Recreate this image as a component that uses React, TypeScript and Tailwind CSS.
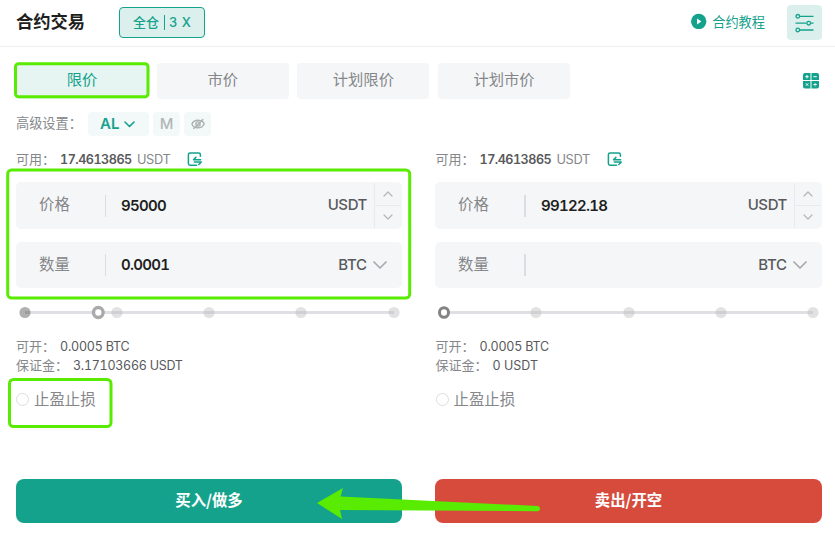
import React from "react";

const cjk = "font-['Noto_Sans_CJK_SC',sans-serif]";
const latin = "font-['Inter','Noto_Sans_CJK_SC',sans-serif] tabular-nums";

function Chevron({ className, up = false, w = 8, h = 4, stroke = 1.2 }: { className?: string; up?: boolean; w?: number; h?: number; stroke?: number }) {
  return (
    <svg width={w + 2} height={h + 2} viewBox={`0 0 ${w + 2} ${h + 2}`} fill="none" stroke="currentColor" strokeWidth={stroke} strokeLinecap="round" strokeLinejoin="round" className={className}>
      <path d={up ? `M1 ${h + 1}L${w / 2 + 1} 1L${w + 1} ${h + 1}` : `M1 1L${w / 2 + 1} ${h + 1}L${w + 1} 1`} />
    </svg>
  );
}

function TransferIcon() {
  return (
    <svg width="16" height="16" viewBox="0 0 16 16" fill="none" stroke="#15a28c" strokeWidth="1.5" strokeLinecap="round" strokeLinejoin="round">
      <path d="M13.4 5.2V3.6Q13.4 1.9 11.7 1.9H3.1Q1.4 1.9 1.4 3.6V12.5Q1.4 14.2 3.1 14.2H9.6" />
      <path d="M13.6 8.8H6.5L8.9 6.4M7.3 11.1H14.2L11.8 13.5" />
    </svg>
  );
}

function Header() {
  return (
    <header className="flex h-[47px] items-start border-b border-[#eeeff1] pl-4 pr-[13px]">
      <h1 className="mt-[8px] w-[103px] text-[17.3px] font-bold leading-[25px] text-[#1e1f20]">合约交易</h1>
      <div className="mt-[7px] flex h-[31px] w-[86px] items-center rounded-[4px] border border-[#15a28c] bg-[#dbf0ed] pl-[13px] text-[13px] font-medium text-[#15a28c]">
        <span className="pb-[2px]">全仓</span>
        <span className="ml-[5px] h-[15px] w-px bg-[#15a28c]" />
        <span className={`${latin} ml-[4px] text-[13px] tracking-[0.4px]`}>3 X</span>
      </div>
      <div className="ml-auto mt-[13px] flex h-4 items-center text-[13.2px] text-[#15a28c]">
        <svg width="16" height="16" viewBox="0 0 16 16"><circle cx="7.7" cy="8.5" r="7.7" fill="#15a28c" /><path d="M6 5.5L10.4 8.5L6 11.5Z" fill="white" /></svg>
        <span className="ml-[5px] pt-px">合约教程</span>
      </div>
      <div className="ml-[22px] mt-[5px] flex h-[35px] w-[35px] items-center justify-center rounded-[4px] bg-[#dbf0ed]">
        <svg width="20" height="20" viewBox="0 0 20 20" fill="none" stroke="#15a28c" strokeWidth="1.3">
          <path d="M4.5 3.3H18.5M.5 10.2H11.5M15.6 10.2H18.5M4.5 17H18.5" />
          <circle cx="2.8" cy="3.3" r="1.8" /><circle cx="13.7" cy="10.2" r="1.8" /><circle cx="2.8" cy="17" r="1.8" />
        </svg>
      </div>
    </header>
  );
}

function Tabs() {
  const tabs = ["限价", "市价", "计划限价", "计划市价"];
  return (
    <div className="mt-4 flex h-9 items-center justify-between pl-4 pr-4">
      <div className="flex gap-[8.7px]">
        {tabs.map((t, i) => (
          <div key={t} className={`flex h-9 w-[132px] items-center justify-center rounded-[4px] pb-[5px] text-[15.3px] ${i === 0 ? "bg-[#e7f5f2] text-[#15a28c]" : "bg-[#f5f6f8] text-[#85878a]"}`}>{t}</div>
        ))}
      </div>
      <svg width="16" height="16" viewBox="0 0 16 16">
        <path fill="#15a28c" d="M2 0H7.5V7.1H0V2Q0 0 2 0ZM8.5 0H14Q16 0 16 2V7.1H8.5ZM0 8.1H7.5V15.4H2Q0 15.4 0 13.4ZM8.5 8.1H16V13.4Q16 15.4 14 15.4H8.5Z" />
        <path stroke="white" strokeWidth="1" d="M4 2V5.4M2.3 3.7H5.7M10.4 3.7H13.8M2.9 10.4L5.2 12.7M5.2 10.4L2.9 12.7M10.4 11.6H13.8M12.1 9.9V10.7M12.1 12.5V13.3" />
      </svg>
    </div>
  );
}

function Settings() {
  return (
    <div className="mt-[13px] flex h-6 items-center pl-4">
      <span className="w-[72px] whitespace-nowrap pb-[2px] text-[13.2px] text-[#85878a]">高级设置：</span>
      <div className={`${latin} flex h-6 w-[61px] items-center rounded-[4px] bg-[#f3f9f9] pl-3 text-[15px] font-semibold text-[#15a28c]`}>
        AL<Chevron className="ml-[5px] mt-px" w={9} h={4.5} stroke={1.6} />
      </div>
      <div className={`${latin} ml-1 flex h-6 w-[27px] items-center justify-center rounded-[4px] bg-[#f3f9f9] text-[15px] font-medium text-[#b2b6b8]`}>M</div>
      <div className="ml-1 flex h-6 w-[27px] items-center justify-center rounded-[4px] bg-[#f3f9f9]">
        <svg width="14" height="12" viewBox="0 0 14 12" fill="none" stroke="#acb1b2" strokeWidth="1.4" strokeLinecap="round">
          <path d="M3 9Q1.5 7.8 .9 6Q2.6 2.2 7 2.2Q8.5 2.2 9.6 2.6M11.4 3.4Q12.8 4.6 13.2 6Q11.3 9.8 7 9.8Q5.8 9.8 4.9 9.5M11.8 1.6L2.8 10.4" />
          <circle cx="7" cy="6" r="2.1" />
        </svg>
      </div>
    </div>
  );
}

function Box({ label, value, unit, price, wide }: { label: string; value: string; unit: string; price?: boolean; wide?: boolean }) {
  return (
    <div className={`flex w-full items-center rounded-[5px] bg-[#f5f6f8] ${price ? "h-[47px]" : "h-[46px]"}`}>
      <span className={`w-[89px] pl-[23px] text-[15.4px] text-[#85878a] ${price ? "pb-[3px]" : "pb-[2px]"}`}>{label}</span>
      <span className={`h-[22px] bg-[#dcdde0] ${wide ? "w-[2px]" : "w-px"}`} />
      <span className={`${latin} ml-[15px] text-[15px] font-semibold tracking-[-0.7px] text-[#1e1f20] ${price ? "pt-px" : ""}`}>{value}</span>
      <span className={`${latin} ml-auto text-[15px] font-medium tracking-[-0.4px] text-[#58595b]`}>{unit}</span>
      {price ? (
        <div className="ml-[7px] mr-px flex h-[45px] w-[27px] flex-col border-l border-[#e9eaec] text-[#b5b6b9]">
          <div className="flex h-[23px] items-center justify-center border-b border-[#e9eaec]"><Chevron up /></div>
          <div className="flex h-[22px] items-center justify-center pb-px"><Chevron /></div>
        </div>
      ) : (
        <Chevron className="ml-[6px] mr-[15.5px]" w={12} h={6} stroke={1.7} />
      )}
    </div>
  );
}

function Track({ active }: { active: boolean }) {
  return (
    <svg className="mt-[17px] block h-[15px] w-full" viewBox={active ? "16 305 386 15" : "435 305 387 15"} fill="none">
      {active ? (
        <g>
          <path d="M25 312.5H394" stroke="#dfe0e6" strokeWidth="3" />
          <circle cx="25" cy="312.5" r="5.6" fill="#b0b0b1" />
          <path d="M25 312.5H30" stroke="#9c9da0" strokeWidth="3" />
          <g fill="#bbb" opacity=".42"><circle cx="117" cy="312.5" r="5.6" /><circle cx="209" cy="312.5" r="5.6" /><circle cx="301" cy="312.5" r="5.6" /><circle cx="394" cy="312.5" r="5.6" /></g>
          <ellipse cx="98.3" cy="312.5" rx="4.8" ry="5" fill="white" stroke="#aaa" strokeWidth="3.4" />
        </g>
      ) : (
        <g>
          <path d="M444 312.5H813" stroke="#dfe0e4" strokeWidth="3" />
          <g fill="#bbb" opacity=".42"><circle cx="536" cy="312.5" r="5.6" /><circle cx="629" cy="312.5" r="5.6" /><circle cx="721" cy="312.5" r="5.6" /><circle cx="813" cy="312.5" r="5.6" /></g>
          <ellipse cx="444" cy="312.5" rx="4.5" ry="4.8" fill="white" stroke="#828384" strokeWidth="3" />
        </g>
      )}
    </svg>
  );
}

function Panel({ buy }: { buy: boolean }) {
  const inset = buy ? "" : "pl-[0.5px]";
  return (
    <section className={buy ? "w-[386px]" : "w-[387px]"}>
      <div className={`${inset} flex h-4 items-center whitespace-nowrap text-[13px] text-[#85878a]`}>
        <span className="w-[44px] shrink-0 pb-px">可用：</span>
        <span className={`${latin} w-[77px] shrink-0 pt-[2px] text-[12.6px] font-semibold tracking-[-0.5px] text-[#58595b]`}>17.4613865</span>
        <span className={`${latin} w-[50px] shrink-0 pt-[2px] text-[12.8px] tracking-[-0.4px]`}>USDT</span>
        <TransferIcon />
      </div>
      <div className="mt-[15px] flex flex-col gap-[13px] text-[#a8aaad]">
        <Box label="价格" value={buy ? "95000" : "99122.18"} unit="USDT" price wide={!buy} />
        <Box label="数量" value={buy ? "0.0001" : ""} unit="BTC" wide={!buy} />
      </div>
      <Track active={buy} />
      <div className={`${inset} mt-[17px] flex h-[19px] items-center text-[13px] text-[#85878a]`}>
        <span className="w-[44px] whitespace-nowrap pb-[2px]">可开：</span>
        <span className={`${latin} pt-px text-[12.5px] tracking-[-0.2px] text-[#58595b]`}>0.0005 BTC</span>
      </div>
      <div className={`${inset} flex h-[19px] items-center text-[13px] text-[#85878a]`}>
        <span className="w-[57px] whitespace-nowrap pb-[2px]">保证金：</span>
        <span className={`${latin} pt-px text-[12.5px] text-[#58595b] ${buy ? "tracking-[-0.27px]" : ""}`}>{buy ? "3.17103666 USDT" : "0 USDT"}</span>
      </div>
      <div className={`${inset} mt-[14px] flex h-5 items-center text-[15.4px] text-[#85878a]`}>
        <span className="mr-[5px] h-[13px] w-[13px] rounded-full border border-[#dcdddf]" />
        <span className="pb-px">止盈止损</span>
      </div>
      <button className={`mt-[70px] flex h-11 w-full items-center justify-center rounded-[8px] pb-[3px] text-[15.4px] font-bold text-white ${buy ? "bg-[#15a28c]" : "bg-[#d64b3b]"}`}>
        {buy ? "买入/做多" : "卖出/开空"}
      </button>
    </section>
  );
}

export default function App() {
  return (
    <main lang="zh-CN" className={`${cjk} relative h-[535px] w-[835px] overflow-hidden bg-white`}>
      <Header />
      <Tabs />
      <Settings />
      <div className="mt-[15px] flex gap-[33px] pl-4">
        <Panel buy />
        <Panel buy={false} />
      </div>
      <svg className="pointer-events-none absolute inset-0" width="835" height="535" fill="none" stroke="#59eb02" strokeWidth="3">
        <rect x="15.5" y="63.7" width="132.5" height="33" rx="3" />
        <rect x="7.7" y="170" width="402" height="128" rx="4" />
        <rect x="9.5" y="379.5" width="101.5" height="47" rx="4" />
        <path d="M317 503L343 488L340.5 496.5L538 506Q540 506.5 540 509Q540 511 538 511.3L340 510L342 519Z" fill="#59eb02" stroke="none" />
      </svg>
    </main>
  );
}
